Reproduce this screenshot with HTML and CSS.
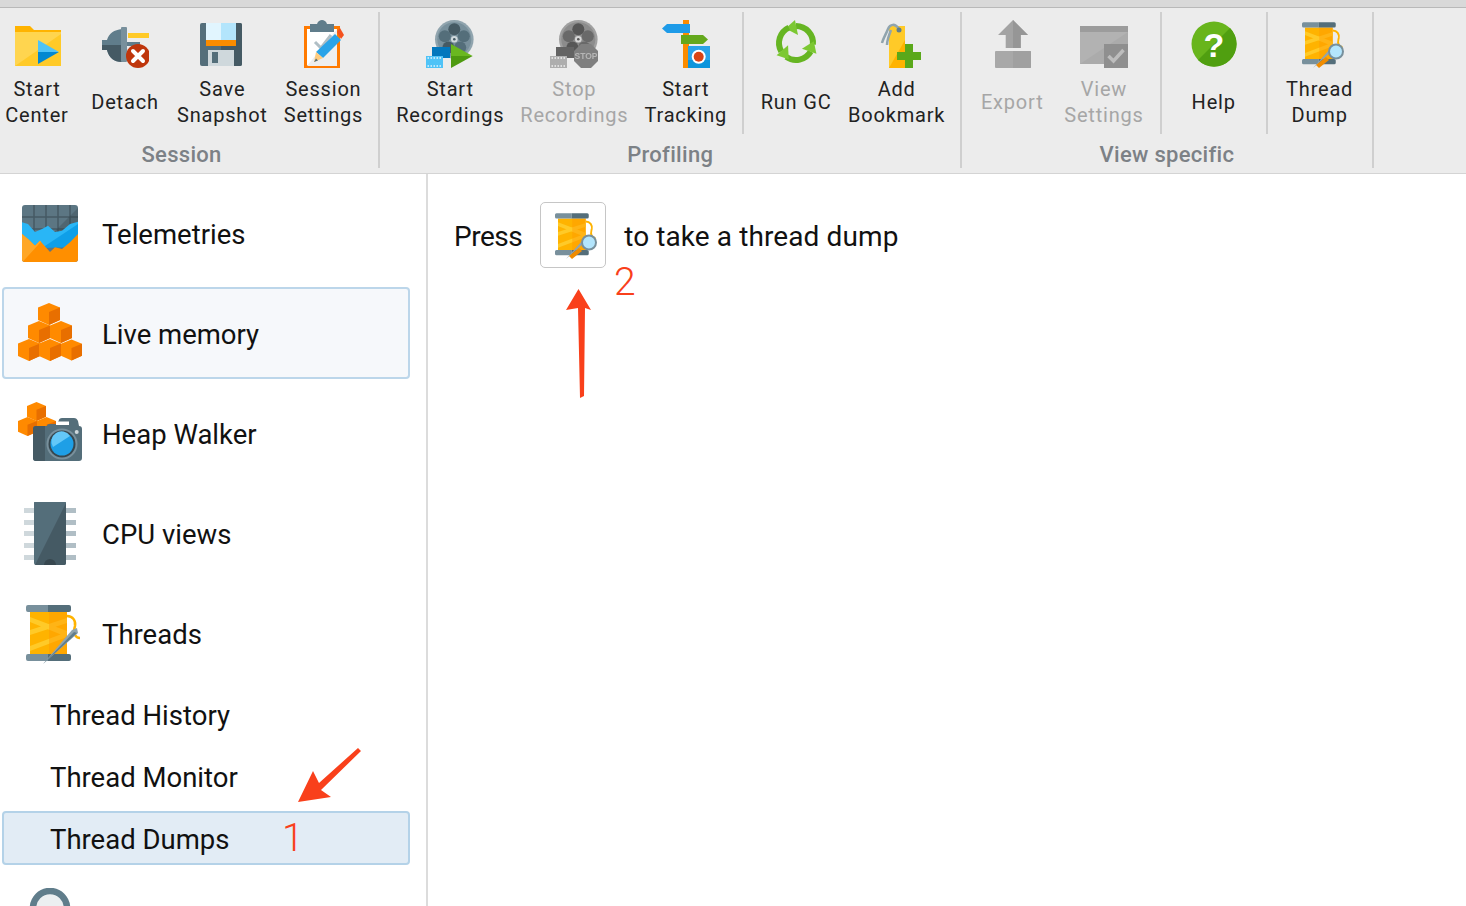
FILE: index.html
```html
<!DOCTYPE html>
<html lang="en">
<head>
    <meta charset="UTF-8">
    <title>Thread Dumps</title>
    <link rel="stylesheet" href="styles.css">
</head>
<body>
    <svg class="sprite" xmlns="http://www.w3.org/2000/svg">
        <symbol id="i-start-center" viewBox="0 0 48 48">
            <path d="M2 6h15l4 4h27v36H2z" fill="#ffb300"/>
            <path d="M2 12h46v34H2z" fill="#ffd54f"/>
            <path d="M2 46L48 14v32z" fill="#ffca28"/>
            <path d="M25 20l21 12H25z" fill="#4fc3f7"/>
            <path d="M25 32h21L25 44z" fill="#0288d1"/>
        </symbol>
        <symbol id="i-detach" viewBox="0 0 48 48">
            <path d="M27 13h22v5H27z" fill="#ffca28"/>
            <path d="M1 20h5c2-7 7-10 15-11v33c-8 0-13-4-15-12H1z" fill="#607d8b"/>
            <path d="M1 25h20v17c-8 0-13-4-15-12H1z" fill="#455a64"/>
            <rect x="20" y="7" width="6" height="35" rx="1" fill="#78909c"/>
            <path d="M26 22h13v4H26z" fill="#607d8b"/>
            <circle cx="37" cy="36" r="12" fill="#bf360c"/>
            <path d="M32 31l10 10M42 31L32 41" stroke="#fff" stroke-width="4" stroke-linecap="round"/>
        </symbol>
        <symbol id="i-save" viewBox="0 0 48 48">
            <path d="M4 3h38a2 2 0 0 1 2 2v39a2 2 0 0 1-2 2H4a2 2 0 0 1-2-2V5a2 2 0 0 1 2-2z" fill="#546e7a"/>
            <path d="M23 3h19a2 2 0 0 1 2 2v39a2 2 0 0 1-2 2H23z" fill="#455a64"/>
            <path d="M8 3h15v17H8z" fill="#e1f5fe"/>
            <path d="M23 3h15v17H23z" fill="#b3e5fc"/>
            <path d="M8 20h30v6H8z" fill="#fb8c00"/>
            <path d="M10 30h26v16H10z" fill="#cfd8dc"/>
            <path d="M14 32h6v11h-6z" fill="#546e7a"/>
        </symbol>
        <symbol id="i-settings" viewBox="0 0 48 48">
            <path d="M6.500 7.500h33v39h-33z" fill="#fff" stroke="#ff7a00" stroke-width="3"/>
            <path d="M8 46L38 9v37z" fill="#eeeeee"/>
            <path d="M11 4h7c1-3 3-4 5-4s4 1 5 4h7v8H11z" fill="#607d8b"/>
            <path d="M16 22l6 6 10-13" fill="none" stroke="#b0bec5" stroke-width="3"/>
            <path d="M36 14l6 6-18 18-7-6z" fill="#29a3e8"/>
            <path d="M38 12l3-4 4 7-3 4z" fill="#f4511e"/>
            <path d="M17 32l7 6-9 4z" fill="#ffcc80"/>
            <path d="M17 38.500l-2 3.500 4-1.500z" fill="#546e7a"/>
        </symbol>
        <symbol id="i-reel" viewBox="0 0 48 48">
            <circle cx="28.300" cy="19.300" r="19.300" fill="#90a4ae"/>
            <circle cx="28.300" cy="19.300" r="17" fill="#78909c"/>
            <circle cx="28.300" cy="9.300" r="6" fill="#455a64"/>
            <circle cx="37.800" cy="16.200" r="6" fill="#546e7a"/>
            <circle cx="34.200" cy="27.400" r="6" fill="#546e7a"/>
            <circle cx="22.400" cy="27.400" r="6" fill="#455a64"/>
            <circle cx="18.800" cy="16.200" r="6" fill="#546e7a"/>
            <circle cx="28.300" cy="19.300" r="3.300" fill="#cfd8dc"/>
            <circle cx="28.300" cy="19.300" r="1.300" fill="#455a64"/>
            <path d="M6 27h18v11H6z" fill="#0277bd"/>
            <path d="M0 36h17v12H0z" fill="#4fc3f7"/>
            <path d="M1.500 38h14M1.500 46h14" stroke="#e1f5fe" stroke-width="1.500" stroke-dasharray="1.500 1.500"/>
        </symbol>
        <symbol id="i-play" viewBox="0 0 48 48">
            <path d="M25 24l21.700 12H25z" fill="#6ab820"/>
            <path d="M25 36h21.700L25 48z" fill="#4e9a10"/>
        </symbol>
        <symbol id="i-stop" viewBox="0 0 48 48">
            <path d="M31 24h10l7 7v10l-7 7H31l-7-7V31z" fill="#7f7f7f"/>
            <text x="36" y="39" class="stop-sign">STOP</text>
        </symbol>
        <symbol id="i-tracking" viewBox="0 0 48 48">
            <path d="M21 0h6v48h-6z" fill="#fb8c00"/>
            <path d="M0 8.500L5 4h23v9H5z" fill="#1e9be8"/>
            <path d="M19 15h22l5 4.500-5 4.500H19z" fill="#64a81c"/>
            <path d="M26 26h22v22H26z" fill="#29a3e8"/>
            <path d="M26 40h22v8H26z" fill="#0d95dc"/>
            <circle cx="36.700" cy="36.700" r="7" fill="#fff"/>
            <circle cx="36.700" cy="36.700" r="5" fill="#d84315"/>
        </symbol>
        <symbol id="i-gc" viewBox="0 0 48 48">
            <g id="gc-arm">
                <path d="M24 6A17 17 0 0 1 40.900 24.500" fill="none" stroke="#66b522" stroke-width="6"/>
                <path d="M13.500 8.500L23 0l3 15z" fill="#7cc832"/>
            </g>
            <use href="#gc-arm" transform="rotate(120 24 23)"/>
            <use href="#gc-arm" transform="rotate(240 24 23)"/>
        </symbol>
        <symbol id="i-bookmark" viewBox="0 0 48 48">
            <path d="M16 6h16v42H16z" fill="#ffca28"/>
            <path d="M16 48L32 20v28z" fill="#ffb300"/>
            <path d="M26 9C22 3 17 4 15 9c-2 5-5 10-6 14M18 10c-2 5-4 11-4 15" fill="none" stroke="#90a4ae" stroke-width="2.500"/>
            <circle cx="26" cy="10" r="2.500" fill="#607d8b"/>
            <path d="M32 24h8v8h8v8h-8v8h-8v-8h-8v-8h8z" fill="#5aa81a"/>
        </symbol>
        <symbol id="i-export" viewBox="0 0 48 48">
            <path d="M25 0l15 15h-7.300v13H17.700V15H10z" fill="#a3a3a3"/>
            <path d="M25 0l15 15h-7.300v13H25z" fill="#969696"/>
            <rect x="7" y="31" width="36" height="17" rx="1" fill="#a8a8a8"/>
            <path d="M25 31h17a1 1 0 0 1 1 1v15a1 1 0 0 1-1 1H25z" fill="#a0a0a0"/>
        </symbol>
        <symbol id="i-view" viewBox="0 0 48 48">
            <path d="M0 6h48v38H0z" fill="#b2b2b2"/>
            <path d="M0 6h48v6H0z" fill="#9c9c9c"/>
            <path d="M0 44L48 12v32z" fill="#ababab"/>
            <path d="M24 24h24v24H24z" fill="#8f8f8f"/>
            <path d="M28.500 36l5 5 10-11" fill="none" stroke="#bdbdbd" stroke-width="3.500"/>
        </symbol>
        <symbol id="i-help" viewBox="0 0 48 48">
            <circle cx="24" cy="24" r="22.500" fill="#68b51c"/>
            <path d="M40 8A22.500 22.500 0 0 1 8 40z" fill="#509f10"/>
            <text x="24" y="37" class="help-mark">?</text>
        </symbol>
        <symbol id="i-spool" viewBox="0 0 64 64">
            <path d="M12 10h37v42H12z" fill="#ffb300"/>
            <path d="M12 15l37 14v6L12 20zM12 28l37-12v5L12 33zM12 44l37-14v5L12 49z" fill="#ffca28"/>
            <path d="M31 10h18v42H31z" fill="#ff9800" opacity=".45"/>
            <path d="M10 3h20v7H10a2 2 0 0 1-2-2V5a2 2 0 0 1 2-2zM10 52h20v7H10a2 2 0 0 1-2-2v-3a2 2 0 0 1 2-2z" fill="#78909c"/>
            <path d="M30 3h21a2 2 0 0 1 2 2v3a2 2 0 0 1-2 2H30zM30 52h21a2 2 0 0 1 2 2v3a2 2 0 0 1-2 2H30z" fill="#546e7a"/>
            <path d="M49 14c6 0 9 5 8 10-1 4-2 6 0 9 1 2 3 3 5 3" fill="none" stroke="#ffb300" stroke-width="2.500"/>
        </symbol>
        <symbol id="i-threads" viewBox="0 0 64 64">
            <use href="#i-spool" width="64" height="64"/>
            <path d="M25 62l29-34 5-2 1 5z" fill="#90a4ae"/>
            <path d="M25 62l31-32 3 1z" fill="#607d8b"/>
        </symbol>
        <symbol id="i-dump" viewBox="0 0 48 48">
            <use href="#i-spool" width="48" height="48"/>
            <path d="M17 48l16-18 2 2z" fill="#90a4ae"/>
            <path d="M23 48l-3-3 10-8 3 3z" fill="#f08c00"/>
            <circle cx="40" cy="31.500" r="7" fill="#b3e5fc" stroke="#78909c" stroke-width="2"/>
        </symbol>
        <symbol id="i-telemetries" viewBox="0 0 64 64">
            <rect x="4" y="3" width="56" height="57" rx="3" fill="#5c7683"/>
            <path d="M4 15h56M4 27h56M16 3v28M28 3v28M40 3v28M52 3v28" stroke="#455a64" stroke-width="1.500"/>
            <path d="M60 6v30H30z" fill="#263238" opacity=".25"/>
            <path d="M4 20.300l6 1.700 7 8 7-3 6-3.300 7 6.300 7-1.300 8-6.700 8-2.300V45H4z" fill="#29b6f6"/>
            <path d="M24 46L60 22v23z" fill="#0f9fe8"/>
            <path d="M4 32l6 5 7 6.700 5-5L32 50l5-4.700 7 1.700 8-6.700 8-8.300v25a3 3 0 0 1-3 3H7a3 3 0 0 1-3-3z" fill="#ff8f00"/>
            <path d="M4 32l6 5 7 6.700 5-5 1 1L5 59.500a3 3 0 0 1-1-2.500z" fill="#ffa726"/>
        </symbol>
        <symbol id="i-cube" viewBox="0 0 22 22">
            <path d="M0 4.500L11 0l11 4.500V17l-11 5-11-5z" fill="#ff8a00"/>
            <path d="M11 9l11-4.500V17l-11 5z" fill="#e86f00"/>
        </symbol>
        <symbol id="i-memory" viewBox="0 0 64 64">
            <use href="#i-cube" x="20" y="1" width="22" height="22"/>
            <use href="#i-cube" x="10" y="19" width="22" height="22"/>
            <use href="#i-cube" x="32" y="19" width="22" height="22"/>
            <use href="#i-cube" x="0" y="37" width="22" height="22"/>
            <use href="#i-cube" x="21" y="37" width="22" height="22"/>
            <use href="#i-cube" x="43" y="37" width="21" height="22"/>
        </symbol>
        <symbol id="i-heap" viewBox="0 0 64 64">
            <use href="#i-cube" x="9" y="0" width="19" height="19"/>
            <use href="#i-cube" x="0" y="15" width="19" height="19"/>
            <use href="#i-cube" x="19" y="15" width="19" height="19"/>
            <path d="M29 24c0-2 2-2 4-2h6l2-4c0-1 1-2 3-2h12c2 0 3 1 4 3l1 5c2 0 3 1 3 3v29a3 3 0 0 1-3 3H18a3 3 0 0 1-3-3V27c0-2 1-3 3-3z" fill="#546e7a"/>
            <path d="M15 27c0-2 1-3 3-3h9v35h-9a3 3 0 0 1-3-3z" fill="#455a64"/>
            <path d="M38 19.500h13v3.500H38z" fill="#fff"/>
            <circle cx="44" cy="42" r="15.500" fill="#78909c"/>
            <circle cx="44" cy="42" r="13.500" fill="#37474f"/>
            <circle cx="44" cy="42" r="11.500" fill="#1e9fe6"/>
            <path d="M35 45a10 10 0 0 1 17-11z" fill="#64c8f8"/>
            <circle cx="58.700" cy="30" r="2" fill="#cfd8dc"/>
        </symbol>
        <symbol id="i-cpu" viewBox="0 0 64 64">
            <path d="M6 6h10v5H6zM6 18h10v5H6zM6 29h10v5H6zM6 41h10v5H6zM6 53h10v5H6z" fill="#cfd8dc"/>
            <path d="M48 6h10v5H48zM48 18h10v5H48zM48 29h10v5H48zM48 41h10v5H48zM48 53h10v5H48z" fill="#b0bec5"/>
            <rect x="16" y="-1" width="32" height="64" rx="2" fill="#546e7a"/>
            <path d="M48 1v60a2 2 0 0 1-2 2H17z" fill="#455a64"/>
            <path d="M26 63a6 6 0 0 1 12 0z" fill="#37474f"/>
        </symbol>
        <symbol id="i-probes" viewBox="0 0 64 64">
            <circle cx="32" cy="20" r="17" fill="#eceff1" stroke="#607d8b" stroke-width="6.500"/>
        </symbol>
    </svg>

    <div class="titlebar"></div>

    <header class="toolbar">
        <section class="group group-session">
            <div class="items">
                <div class="sub tight">
                    <div class="tool"><svg class="icon"><use href="#i-start-center"/></svg><div class="tool-name">Start<br>Center</div></div>
                    <div class="tool"><svg class="icon"><use href="#i-detach"/></svg><div class="tool-name">Detach</div></div>
                    <div class="tool"><svg class="icon"><use href="#i-save"/></svg><div class="tool-name">Save<br>Snapshot</div></div>
                    <div class="tool"><svg class="icon"><use href="#i-settings"/></svg><div class="tool-name">Session<br>Settings</div></div>
                </div>
            </div>
            <div class="group-name">Session</div>
        </section>
        <section class="group">
            <div class="items">
                <div class="sub split tight">
                    <div class="tool"><svg class="icon"><use href="#i-reel"/><use href="#i-play"/></svg><div class="tool-name">Start<br>Recordings</div></div>
                    <div class="tool off"><svg class="icon"><use href="#i-reel"/><use href="#i-stop"/></svg><div class="tool-name">Stop<br>Recordings</div></div>
                    <div class="tool"><svg class="icon"><use href="#i-tracking"/></svg><div class="tool-name">Start<br>Tracking</div></div>
                </div>
                <div class="sub tight">
                    <div class="tool"><svg class="icon"><use href="#i-gc"/></svg><div class="tool-name">Run GC</div></div>
                    <div class="tool"><svg class="icon"><use href="#i-bookmark"/></svg><div class="tool-name">Add<br>Bookmark</div></div>
                </div>
            </div>
            <div class="group-name">Profiling</div>
        </section>
        <section class="group">
            <div class="items">
                <div class="sub split sub-export">
                    <div class="tool off"><svg class="icon"><use href="#i-export"/></svg><div class="tool-name">Export</div></div>
                    <div class="tool off"><svg class="icon"><use href="#i-view"/></svg><div class="tool-name">View<br>Settings</div></div>
                </div>
                <div class="sub split">
                    <div class="tool"><svg class="icon"><use href="#i-help"/></svg><div class="tool-name">Help</div></div>
                </div>
                <div class="sub">
                    <div class="tool"><svg class="icon"><use href="#i-dump"/></svg><div class="tool-name">Thread<br>Dump</div></div>
                </div>
            </div>
            <div class="group-name">View specific</div>
        </section>
    </header>

    <div class="content">
        <nav class="sidebar">
            <div class="nav-row"><svg class="nav-icon"><use href="#i-telemetries"/></svg>Telemetries</div>
            <div class="nav-row active"><svg class="nav-icon"><use href="#i-memory"/></svg>Live memory</div>
            <div class="nav-row"><svg class="nav-icon"><use href="#i-heap"/></svg>Heap Walker</div>
            <div class="nav-row"><svg class="nav-icon"><use href="#i-cpu"/></svg>CPU views</div>
            <div class="nav-row"><svg class="nav-icon"><use href="#i-threads"/></svg>Threads</div>
            <div class="nav-sub">Thread History</div>
            <div class="nav-sub">Thread Monitor</div>
            <div class="nav-sub selected">Thread Dumps</div>
            <div class="nav-row"><svg class="nav-icon"><use href="#i-probes"/></svg></div>
        </nav>
        <main class="panel">
            <span class="panel-text press">Press</span>
            <div class="dump-button"><svg class="icon"><use href="#i-dump"/></svg></div>
            <span class="panel-text">to take a thread dump</span>
        </main>
    </div>

    <!-- red notes drawn on top of the screenshot -->
    <svg class="arrows" viewBox="0 0 1466 906">
        <path d="M358 748L361 751 321 790 331 797 298 802 313 771 319 783z" fill="#f9401b"/>
        <path d="M578.500 289L591 310 585 308 584 396 580 398 578 308 566 310z" fill="#f9401b"/>
    </svg>
    <span class="note note-one">1</span>
    <span class="note note-two">2</span>
</body>
</html>
```

FILE: styles.css
```css
html, body {
  margin: 0;
  height: 906px;
  overflow: hidden;
}
body {
  position: relative;
  background-color: #fff;
  color: #111;
  font-family: Roboto, "Liberation Sans", sans-serif;
}
.sprite {
  display: none;
}
.stop-sign {
  font-family: "Liberation Sans", sans-serif;
  font-size: 8.5px;
  font-weight: 700;
  fill: #b5b5b5;
  text-anchor: middle;
}
.help-mark {
  font-family: "Liberation Sans", sans-serif;
  font-size: 34px;
  font-weight: 700;
  fill: #fff;
  text-anchor: middle;
}

.titlebar {
  height: 7px;
  background-color: #d9d9d9;
  border-bottom: 1px solid #b9b9b9;
}

.toolbar {
  display: flex;
  height: 161px;
  padding-top: 4px;
  margin-left: -7px;
  background-color: #ececec;
  border-bottom: 1px solid #d4d4d4;
}
.group {
  display: flex;
  flex-direction: column;
  height: 156px;
  border-right: 2px solid #cfcfcf;
}
.items {
  display: flex;
}
.sub {
  display: flex;
  height: 122px;
  padding: 0 8px;
}
.sub.tight {
  padding-right: 7px;
}
.sub-export {
  padding-left: 6px;
}
.group-session .sub {
  padding-left: 0;
}
.group-session .group-name {
  padding-right: 8px;
}
.sub.split {
  border-right: 2px solid #cfcfcf;
}
.group-name {
  margin-top: 8px;
  line-height: 26px;
  font-size: 22px;
  font-weight: 500;
  letter-spacing: 0.3px;
  text-align: center;
  color: #7c8186;
}

.tool {
  display: flex;
  flex-direction: column;
  align-items: center;
  min-width: 72px;
  padding: 8px 8px 0;
  color: #222;
}
.tool.off {
  color: #a6a6a6;
}
.tool.off .icon {
  filter: grayscale(1);
}
.icon {
  width: 48px;
  height: 48px;
  flex: none;
}
.tool-name {
  display: flex;
  align-items: center;
  justify-content: center;
  height: 52px;
  margin-top: 8px;
  line-height: 26px;
  font-size: 20px;
  letter-spacing: 0.8px;
  text-align: center;
  white-space: nowrap;
}

.content {
  display: flex;
  height: 732px;
  overflow: hidden;
}
.sidebar {
  display: flex;
  flex-direction: column;
  gap: 8px;
  width: 428px;
  height: 732px;
  overflow: hidden;
  box-sizing: border-box;
  flex: none;
  padding: 13px 16px 0 2px;
  border-right: 2px solid #dcdcdc;
}
.nav-row, .nav-sub {
  display: flex;
  align-items: center;
  flex: none;
  box-sizing: border-box;
  padding-top: 2px;
  border: 2px solid transparent;
  border-radius: 4px;
  font-size: 27.5px;
}
.nav-row {
  height: 92px;
  padding-left: 14px;
}
.nav-sub {
  height: 54px;
  padding-left: 46px;
}
.nav-icon {
  width: 64px;
  height: 64px;
  margin-right: 20px;
  flex: none;
}
.active {
  background-color: #f6f8fb;
  border-color: #bcd6ea;
}
.selected {
  background-color: #e2ecf5;
  border-color: #b4d2e8;
}

.panel {
  display: flex;
  align-items: center;
  align-self: flex-start;
  gap: 18px;
  padding: 28px 0 0 26px;
  font-size: 28px;
  letter-spacing: 0.1px;
}
.panel-text {
  padding-top: 3px;
}
.press {
  letter-spacing: -0.5px;
}
.dump-button {
  display: flex;
  align-items: center;
  justify-content: center;
  width: 66px;
  height: 66px;
  box-sizing: border-box;
  background-color: #fff;
  border: 1px solid #c6c6c6;
  border-radius: 5px;
}

/* annotations */
.arrows {
  position: absolute;
  left: 0;
  top: 0;
  width: 1466px;
  height: 906px;
}
.note {
  position: absolute;
  font-family: Roboto, sans-serif;
  font-weight: 300;
  font-size: 39px;
  line-height: 1;
  color: #f9401b;
}
.note-one {
  left: 282px;
  top: 819px;
}
.note-two {
  left: 614px;
  top: 263px;
}
```
